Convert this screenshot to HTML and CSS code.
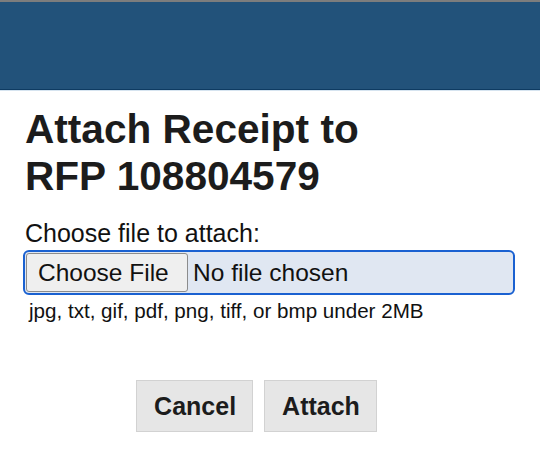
FILE: index.html
```html
<!DOCTYPE html>
<html>
<head>
<meta charset="utf-8">
<link rel="stylesheet" href="styles.css">
</head>
<body>
<header class="topbar"></header>
<main class="content">
  <h1 class="title">Attach Receipt to<br>RFP 108804579</h1>
  <label class="label">Choose file to attach:</label>
  <div class="file">
    <span class="file-btn">Choose File</span>
    <span class="file-name">No file chosen</span>
  </div>
  <p class="hint">jpg, txt, gif, pdf, png, tiff, or bmp under 2MB</p>
  <div class="actions">
    <button class="btn">Cancel</button>
    <button class="btn">Attach</button>
  </div>
</main>
</body>
</html>
```
FILE: styles.css
```css
html, body {
  margin: 0;
  padding: 0;
  background: #ffffff;
  font-family: "Liberation Sans", Arial, sans-serif;
  color: #111111;
}
.topbar {
  height: 87px;
  background: #22527a;
  border-top: 2px solid #7d7d7d;
  border-bottom: 1px solid #0e3b62;
  box-shadow: 0 1px 0 #d6e4f0;
}
.content {
  padding: 0 25px;
  display: flex;
  flex-direction: column;
}
.title {
  margin: 16px 0 0;
  font-size: 40.6px;
  line-height: 47px;
  font-weight: bold;
  color: #1c1c1c;
}
.label {
  margin-top: 19px;
  font-size: 25px;
  line-height: 28px;
}
.file {
  margin: 3px 0 0 -2px;
  height: 45px;
  box-sizing: border-box;
  border: 2px solid #1a61d1;
  border-radius: 6px;
  background: #e0e7f2;
  display: flex;
  align-items: center;
  padding: 0 1px;
}
.file-btn {
  box-sizing: border-box;
  width: 162px;
  height: 39px;
  border: 1px solid #8c8c8c;
  border-radius: 3px;
  background: #efefef;
  font-size: 24.5px;
  padding-left: 11px;
  line-height: 37px;
  color: #111;
}
.file-name {
  margin-left: 5px;
  font-size: 24.5px;
  color: #111;
}
.hint {
  margin: 4px 0 0 4px;
  font-size: 20.6px;
  line-height: 24px;
}
.actions {
  margin: 57px 27px 0 0;
  display: flex;
  justify-content: center;
  gap: 11px;
}
.btn {
  height: 52px;
  padding: 0 16px 0 17px;
  border: 1px solid #d2d2d2;
  background: #e6e6e6;
  font-family: "Liberation Sans", Arial, sans-serif;
  font-weight: bold;
  font-size: 25px;
  color: #1c1c1c;
  border-radius: 0;
}
```
